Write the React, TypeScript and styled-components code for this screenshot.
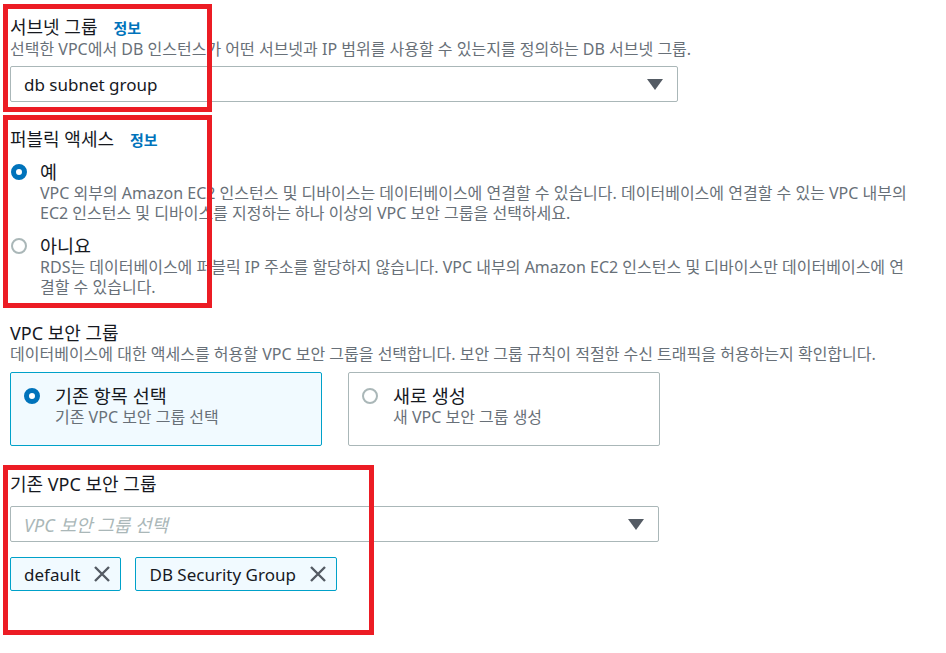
import styled, { createGlobalStyle } from "styled-components";

const GlobalStyle = createGlobalStyle`
  body {
    margin: 0;
    background: #ffffff;
    font-family: "Noto Sans", "Noto Sans CJK KR", sans-serif;
    color: #16191f;
  }
`;

const Page = styled.div`
  position: relative;
  width: 946px;
  height: 653px;
  padding: 16px 0 0 10px;
  box-sizing: border-box;
  display: flex;
  flex-direction: column;
`;

const Field = styled.section<{ $gap?: number }>`
  display: flex;
  flex-direction: column;
  margin-top: ${(p) => p.$gap ?? 0}px;
`;

const Label = styled.div`
  display: flex;
  align-items: baseline;
  gap: 16px;
  font-size: 18px;
  line-height: 22px;
  color: #16191f;
`;

const InfoLink = styled.a`
  font-size: 15px;
  font-weight: 700;
  color: #0073bb;
  text-decoration: none;
`;

const Description = styled.div`
  font-size: 16px;
  line-height: 20px;
  color: #687078;
`;

const Select = styled.div<{ $width: number; $top: number }>`
  width: ${(p) => p.$width}px;
  height: 36px;
  margin-top: ${(p) => p.$top}px;
  box-sizing: border-box;
  border: 1px solid #aab7b8;
  border-radius: 2px;
  display: flex;
  align-items: center;
  justify-content: space-between;
  padding: 0 14px 0 13px;
  font-size: 17px;
  background: #fff;
`;

const Placeholder = styled.span`
  color: #aab7b8;
  font-style: italic;
  font-size: 18px;
`;

const Caret = () => (
  <svg width="16" height="11" viewBox="0 0 16 11">
    <path d="M0 0 H16 L8 11 Z" fill="#545b64" />
  </svg>
);

const RadioCircle = styled.span<{ $checked?: boolean }>`
  flex-shrink: 0;
  width: 16px;
  height: 16px;
  box-sizing: border-box;
  border-radius: 50%;
  background: #fff;
  border: ${(p) => (p.$checked ? "5px solid #0073bb" : "2px solid #aab7b8")};
`;

const RadioOption = styled.div<{ $gap: number }>`
  display: flex;
  gap: 13px;
  margin-top: ${(p) => p.$gap}px;
  padding-left: 1px;
`;

const RadioDot = styled.div`
  height: 22px;
  display: flex;
  align-items: center;
`;

const RadioBody = styled.div`
  display: flex;
  flex-direction: column;
  width: 872px;
`;

const RadioTitle = styled.div`
  font-size: 18.5px;
  line-height: 22px;
`;

const Tiles = styled.div`
  display: flex;
  gap: 26px;
  margin-top: 8px;
`;

const Tile = styled.div<{ $selected?: boolean }>`
  width: 312px;
  height: 74px;
  box-sizing: border-box;
  border: 1px solid ${(p) => (p.$selected ? "#00a1c9" : "#aab7b8")};
  background: ${(p) => (p.$selected ? "#f1faff" : "#fff")};
  border-radius: 2px;
  display: flex;
  gap: 15px;
  padding: 12px 0 0 13px;
`;

const TileText = styled.div`
  display: flex;
  flex-direction: column;
`;

const TileTitle = styled.div`
  font-size: 18.5px;
  line-height: 22px;
`;

const TileSub = styled.div`
  font-size: 16px;
  line-height: 20px;
  color: #687078;
`;

const Tokens = styled.div`
  display: flex;
  gap: 14px;
  margin-top: 15px;
`;

const Token = styled.div`
  height: 34px;
  box-sizing: border-box;
  border: 1px solid #00a1c9;
  background: #f1faff;
  border-radius: 2px;
  display: flex;
  align-items: center;
  gap: 13px;
  padding: 0 9px 0 13px;
  font-size: 17px;
`;

const Dismiss = () => (
  <svg width="18" height="18" viewBox="0 0 18 18">
    <path d="M2 2 L16 16 M16 2 L2 16" stroke="#545b64" strokeWidth="2.4" />
  </svg>
);

const Highlight = styled.div<{ $x: number; $y: number; $w: number; $h: number }>`
  position: absolute;
  left: ${(p) => p.$x}px;
  top: ${(p) => p.$y}px;
  width: ${(p) => p.$w}px;
  height: ${(p) => p.$h}px;
  box-sizing: border-box;
  border: 5px solid #ec1c24;
  pointer-events: none;
`;

export default function App() {
  return (
    <>
      <GlobalStyle />
      <Page>
        <Field>
          <Label>
            서브넷 그룹 <InfoLink>정보</InfoLink>
          </Label>
          <Description>
            선택한 VPC에서 DB 인스턴스가 어떤 서브넷과 IP 범위를 사용할 수 있는지를 정의하는 DB 서브넷 그룹.
          </Description>
          <Select $width={668} $top={7}>
            <span>db subnet group</span>
            <Caret />
          </Select>
        </Field>

        <Field $gap={26}>
          <Label>
            퍼블릭 액세스 <InfoLink>정보</InfoLink>
          </Label>
          <RadioOption $gap={10}>
            <RadioDot>
              <RadioCircle $checked />
            </RadioDot>
            <RadioBody>
              <RadioTitle>예</RadioTitle>
              <Description>
                VPC 외부의 Amazon EC2 인스턴스 및 디바이스는 데이터베이스에 연결할 수 있습니다. 데이터베이스에 연결할 수 있는 VPC 내부의 EC2 인스턴스 및 디바이스를 지정하는 하나 이상의 VPC 보안 그룹을 선택하세요.
              </Description>
            </RadioBody>
          </RadioOption>
          <RadioOption $gap={12}>
            <RadioDot>
              <RadioCircle />
            </RadioDot>
            <RadioBody>
              <RadioTitle>아니요</RadioTitle>
              <Description>
                RDS는 데이터베이스에 퍼블릭 IP 주소를 할당하지 않습니다. VPC 내부의 Amazon EC2 인스턴스 및 디바이스만 데이터베이스에 연결할 수 있습니다.
              </Description>
            </RadioBody>
          </RadioOption>
        </Field>

        <Field $gap={25}>
          <Label>VPC 보안 그룹</Label>
          <Description>
            데이터베이스에 대한 액세스를 허용할 VPC 보안 그룹을 선택합니다. 보안 그룹 규칙이 적절한 수신 트래픽을 허용하는지 확인합니다.
          </Description>
          <Tiles>
            <Tile $selected>
              <RadioDot>
                <RadioCircle $checked />
              </RadioDot>
              <TileText>
                <TileTitle>기존 항목 선택</TileTitle>
                <TileSub>기존 VPC 보안 그룹 선택</TileSub>
              </TileText>
            </Tile>
            <Tile>
              <RadioDot>
                <RadioCircle />
              </RadioDot>
              <TileText>
                <TileTitle>새로 생성</TileTitle>
                <TileSub>새 VPC 보안 그룹 생성</TileSub>
              </TileText>
            </Tile>
          </Tiles>
        </Field>

        <Field $gap={27}>
          <Label>기존 VPC 보안 그룹</Label>
          <Select $width={649} $top={11}>
            <Placeholder>VPC 보안 그룹 선택</Placeholder>
            <Caret />
          </Select>
          <Tokens>
            <Token>
              default
              <Dismiss />
            </Token>
            <Token>
              DB Security Group
              <Dismiss />
            </Token>
          </Tokens>
        </Field>

        <Highlight $x={3} $y={4} $w={209} $h={108} />
        <Highlight $x={3} $y={115} $w={209} $h={193} />
        <Highlight $x={3} $y={465} $w={371} $h={170} />
      </Page>
    </>
  );
}
